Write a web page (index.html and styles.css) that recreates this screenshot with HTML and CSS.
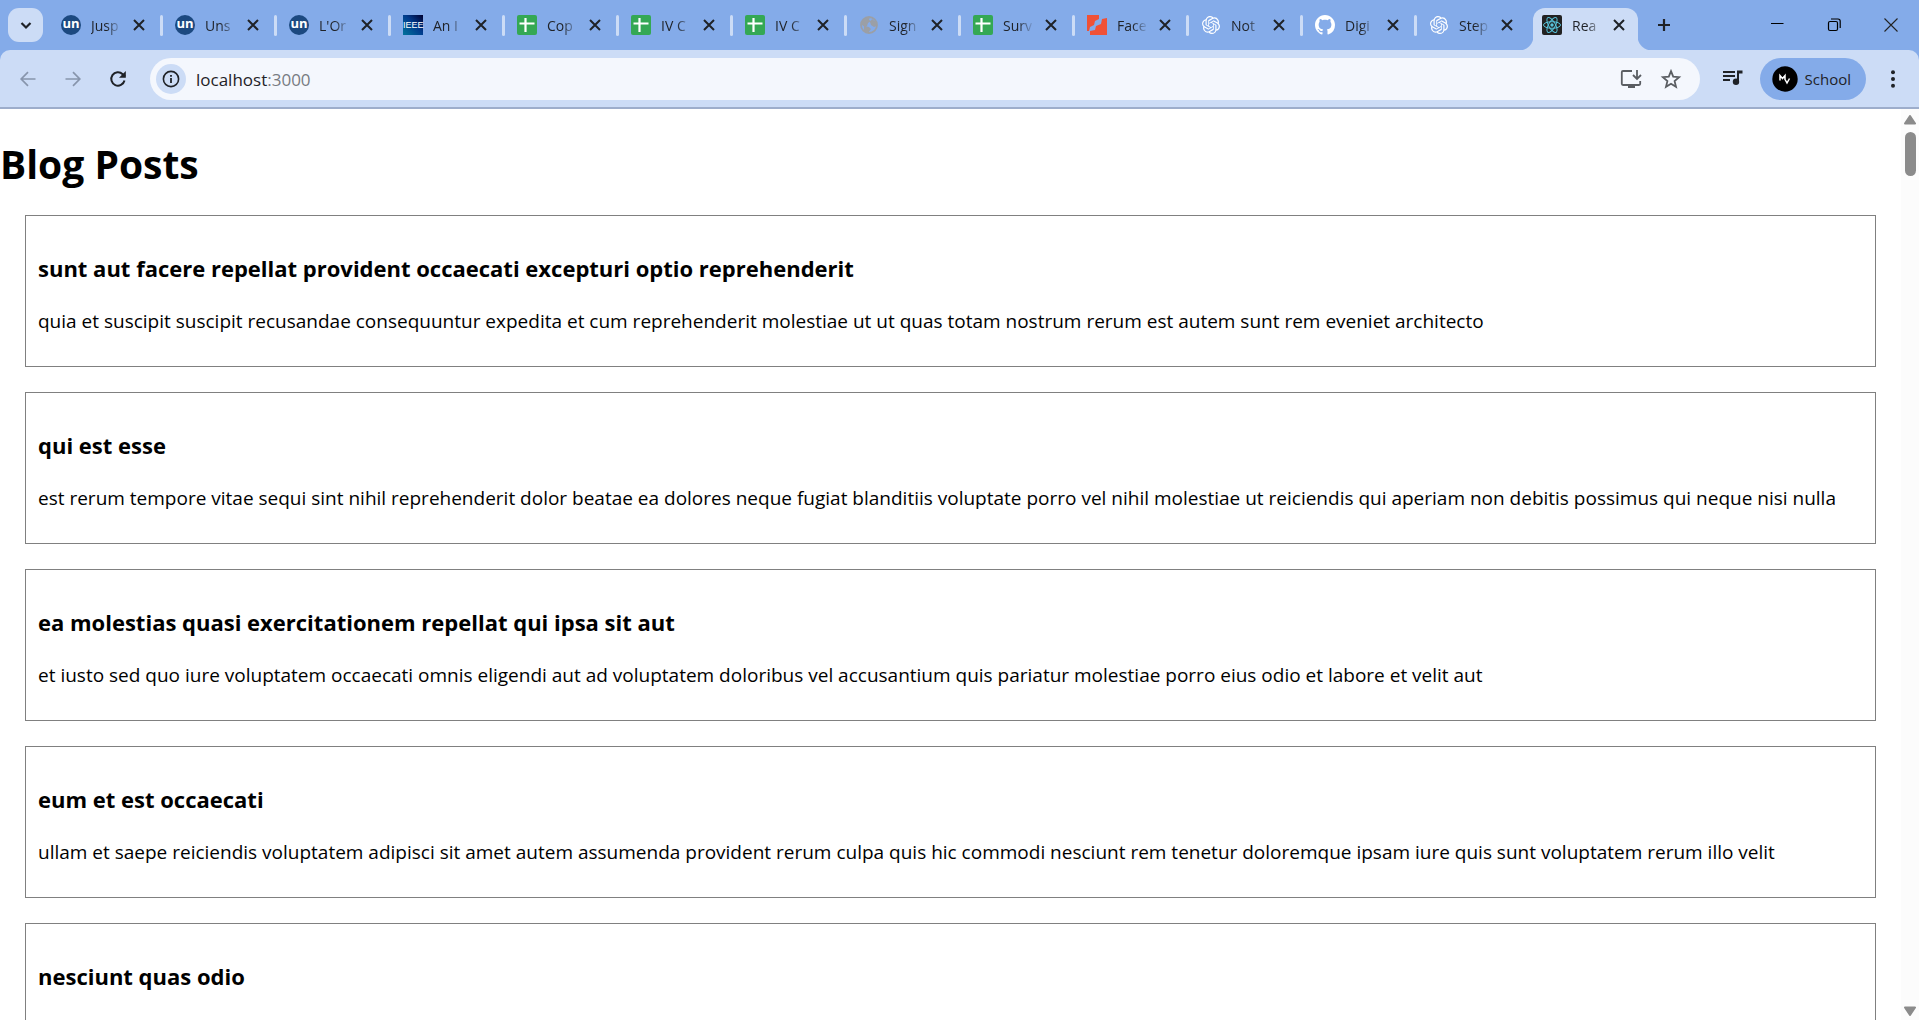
FILE: index.html
```html
<!DOCTYPE html>
<html lang="en">
<head>
<meta charset="utf-8">
<title>React App</title>
<link rel="stylesheet" href="styles.css">
</head>
<body>
<svg class="sprite" aria-hidden="true">
  <symbol id="close" viewBox="0 0 20 20"><path d="M5 5l10 10M15 5L5 15" fill="none" stroke="currentColor" stroke-width="2"/></symbol>
  <symbol id="sheet" viewBox="0 0 20 20"><rect width="20" height="20" rx="2" fill="#34a853"/><path d="M8.500 3v14M2.500 8.500h15" fill="none" stroke="#fff" stroke-width="2.200"/></symbol>
  <symbol id="globe" viewBox="0 0 20 20"><circle cx="10" cy="10" r="8" fill="none" stroke="#9b9fa6" stroke-width="1.800"/><path d="M3 6c2-3 5-4 8-4l-1 3 2 1-3 2-1 3-2 1-3-2zM13 4l4 3 1 4-3 1-3-2-1-3zM5 11l5 1 2 2-3 4-4-2z" fill="#9b9fa6"/></symbol>
  <symbol id="knot" viewBox="0 0 24 24"><path fill="#fff" d="M22.282 9.821a5.985 5.985 0 0 0-.516-4.910 6.046 6.046 0 0 0-6.510-2.900A6.065 6.065 0 0 0 4.981 4.182a5.985 5.985 0 0 0-3.998 2.900 6.046 6.046 0 0 0 .743 7.097 5.980 5.980 0 0 0 .511 4.911 6.051 6.051 0 0 0 6.515 2.900A5.985 5.985 0 0 0 13.260 24a6.056 6.056 0 0 0 5.772-4.206 5.990 5.990 0 0 0 3.998-2.900 6.056 6.056 0 0 0-.748-7.073zM13.260 22.430a4.476 4.476 0 0 1-2.876-1.041l.141-.080 4.779-2.758a.795.795 0 0 0 .392-.681v-6.737l2.020 1.169a.071.071 0 0 1 .038.052v5.583a4.504 4.504 0 0 1-4.494 4.493zM3.600 18.304a4.471 4.471 0 0 1-.535-3.014l.142.085 4.783 2.759a.771.771 0 0 0 .781 0l5.843-3.369v2.332a.080.080 0 0 1-.033.062L9.740 19.950a4.499 4.499 0 0 1-6.140-1.646zM2.340 7.896a4.485 4.485 0 0 1 2.366-1.973V11.600a.766.766 0 0 0 .388.677l5.814 3.354-2.020 1.169a.076.076 0 0 1-.071 0l-4.830-2.787A4.504 4.504 0 0 1 2.340 7.872zm16.597 3.855l-5.833-3.387L15.119 7.200a.076.076 0 0 1 .071 0l4.830 2.791a4.494 4.494 0 0 1-.676 8.105v-5.678a.790.790 0 0 0-.407-.667zm2.010-3.023l-.141-.085-4.774-2.782a.776.776 0 0 0-.785 0L9.409 9.230V6.897a.066.066 0 0 1 .028-.061l4.830-2.787a4.499 4.499 0 0 1 6.680 4.660zM8.307 12.863l-2.020-1.164a.080.080 0 0 1-.038-.057V6.075a4.499 4.499 0 0 1 7.375-3.453l-.142.080L8.704 5.460a.795.795 0 0 0-.393.681zm1.097-2.365l2.602-1.500 2.607 1.500v2.999l-2.597 1.500-2.607-1.500z"/></symbol>
</svg>

<header class="browser">
  <nav class="strip" aria-label="Tabs">
    <button class="search-tabs" aria-label="Search tabs"><svg viewBox="0 0 20 20"><path d="M5.500 8l4.500 4.500L14.500 8" fill="none" stroke="currentColor" stroke-width="2.200"/></svg></button>
    <div class="tabs">
      <div class="tab"><span class="icon un">un</span><span class="title">Jusp</span><button class="x" aria-label="Close"><svg><use href="#close"/></svg></button></div>
      <div class="tab"><span class="icon un">un</span><span class="title">Uns</span><button class="x" aria-label="Close"><svg><use href="#close"/></svg></button></div>
      <div class="tab"><span class="icon un">un</span><span class="title">L'Or</span><button class="x" aria-label="Close"><svg><use href="#close"/></svg></button></div>
      <div class="tab"><span class="icon ieee">IEEE</span><span class="title">An I</span><button class="x" aria-label="Close"><svg><use href="#close"/></svg></button></div>
      <div class="tab"><svg class="icon"><use href="#sheet"/></svg><span class="title">Cop</span><button class="x" aria-label="Close"><svg><use href="#close"/></svg></button></div>
      <div class="tab"><svg class="icon"><use href="#sheet"/></svg><span class="title">IV C</span><button class="x" aria-label="Close"><svg><use href="#close"/></svg></button></div>
      <div class="tab"><svg class="icon"><use href="#sheet"/></svg><span class="title">IV C</span><button class="x" aria-label="Close"><svg><use href="#close"/></svg></button></div>
      <div class="tab"><svg class="icon"><use href="#globe"/></svg><span class="title">Sign</span><button class="x" aria-label="Close"><svg><use href="#close"/></svg></button></div>
      <div class="tab"><svg class="icon"><use href="#sheet"/></svg><span class="title">Surv</span><button class="x" aria-label="Close"><svg><use href="#close"/></svg></button></div>
      <div class="tab"><svg class="icon" viewBox="0 0 20 20"><path d="M0 0h12v4l-4 2-1 4-4 2-1 4H0zM20 3v17H3v-4l5-1 1-4 5-2 1-5z" fill="#f05136"/></svg><span class="title">Face</span><button class="x" aria-label="Close"><svg><use href="#close"/></svg></button></div>
      <div class="tab"><svg class="icon small"><use href="#knot"/></svg><span class="title">Not</span><button class="x" aria-label="Close"><svg><use href="#close"/></svg></button></div>
      <div class="tab"><svg class="icon" viewBox="0 0 16 16"><path fill="#fff" d="M8 0C3.580 0 0 3.580 0 8c0 3.540 2.290 6.530 5.470 7.590.4.070.55-.17.55-.38 0-.19-.01-.82-.01-1.490-2.010.37-2.530-.49-2.690-.94-.09-.23-.48-.94-.82-1.130-.28-.15-.68-.52-.01-.53.63-.01 1.080.58 1.230.82.72 1.210 1.870.87 2.330.66.07-.52.28-.87.51-1.070-1.780-.2-3.640-.89-3.640-3.950 0-.87.31-1.590.82-2.150-.08-.2-.36-1.020.08-2.120 0 0 .67-.21 2.200.82.64-.18 1.320-.27 2-.27s1.360.09 2 .27c1.530-1.040 2.200-.82 2.200-.82.44 1.100.16 1.920.08 2.120.51.56.82 1.270.82 2.150 0 3.070-1.870 3.750-3.650 3.950.29.25.54.73.54 1.480 0 1.070-.01 1.930-.01 2.200 0 .21.15.46.55.38A8.010 8.010 0 0 0 16 8c0-4.420-3.580-8-8-8z"/></svg><span class="title">Digi</span><button class="x" aria-label="Close"><svg><use href="#close"/></svg></button></div>
      <div class="tab"><svg class="icon small"><use href="#knot"/></svg><span class="title">Step</span><button class="x" aria-label="Close"><svg><use href="#close"/></svg></button></div>
      <div class="tab active" aria-current="page"><svg class="icon" viewBox="0 0 20 20"><rect width="20" height="20" rx="2" fill="#222"/><g fill="none" stroke="#58c4dc" stroke-width="1"><ellipse cx="10" cy="10" rx="8.500" ry="3.300"/><ellipse cx="10" cy="10" rx="8.500" ry="3.300" transform="rotate(60 10 10)"/><ellipse cx="10" cy="10" rx="8.500" ry="3.300" transform="rotate(120 10 10)"/></g><circle cx="10" cy="10" r="1.700" fill="#58c4dc"/></svg><span class="title">Rea</span><button class="x" aria-label="Close"><svg><use href="#close"/></svg></button></div>
    </div>
    <button class="new-tab" aria-label="New tab"><svg viewBox="0 0 20 20"><path d="M10 4v12M4 10h12" fill="none" stroke="currentColor" stroke-width="2.200"/></svg></button>
    <div class="window-buttons">
      <button aria-label="Minimize"><svg viewBox="0 0 20 20"><path d="M4 8.500h12.500" stroke="#000"/></svg></button>
      <button aria-label="Restore"><svg viewBox="0 0 20 20"><g fill="none" stroke="#000" stroke-width="1.200"><rect x="4.500" y="6.500" width="9" height="9" rx="1.500"/><path d="M7 4h7q2.200 0 2.200 2.200V13"/></g></svg></button>
      <button aria-label="Close window"><svg viewBox="0 0 20 20"><path d="M3.500 3.500l13 13M16.500 3.500l-13 13" stroke="#222" stroke-width="1.100"/></svg></button>
    </div>
  </nav>
  <div class="toolbar">
    <div class="nav-buttons">
      <button class="dim" aria-label="Back"><svg viewBox="0 0 20 20"><path d="M17.500 10H3.500M10 3.200L3.200 10l6.800 6.800" fill="none" stroke="currentColor" stroke-width="1.700"/></svg></button>
      <button class="dim" aria-label="Forward"><svg viewBox="0 0 20 20"><path d="M2.500 10h14M10 3.200l6.800 6.800-6.800 6.800" fill="none" stroke="currentColor" stroke-width="1.700"/></svg></button>
      <button aria-label="Reload"><svg viewBox="0 0 20 20"><path d="M16.500 11.500A6.700 6.700 0 1 1 14.700 5.200L17 7.500" fill="none" stroke="currentColor" stroke-width="2"/><path d="M17.800 2v6.800H11z" fill="currentColor"/></svg></button>
    </div>
    <div class="omnibox">
      <button class="info" aria-label="Site information"><svg viewBox="0 0 20 20"><circle cx="10" cy="10" r="7.600" fill="none" stroke="currentColor" stroke-width="1.600"/><path d="M10 9v5M10 6v1.800" stroke="currentColor" stroke-width="1.800"/></svg></button>
      <a class="url" href="#posts"><b>localhost</b>:3000</a>
      <button class="tool" aria-label="Install app"><svg viewBox="0 0 22 20"><path d="M12 2H3q-1.200 0-1.200 1.200v11.600Q1.800 16 3 16h16q1.200 0 1.200-1.200V12" fill="none" stroke="currentColor" stroke-width="1.800"/><path d="M8 16.500h7V19H8z" fill="currentColor"/><path d="M17 1v8M13 6l4 4 4-4" fill="none" stroke="currentColor" stroke-width="1.800"/></svg></button>
      <button class="tool" aria-label="Bookmark"><svg viewBox="0 0 22 20"><path d="M11 2.200l2.200 5.500 5.900.5-4.500 3.900 1.400 5.700-5-3.100-5 3.100 1.400-5.700L2.900 8.200l5.900-.5z" fill="none" stroke="currentColor" stroke-width="1.800"/></svg></button>
    </div>
    <button class="media" aria-label="Media"><svg viewBox="0 0 22 20"><path d="M1 3h12M1 7h12M1 11h7" stroke="currentColor" stroke-width="2"/><path d="M15 1.500h5.500V4.500H17V13h-2z" fill="currentColor"/><circle cx="14" cy="12.700" r="3.200" fill="currentColor"/></svg></button>
    <button class="profile"><svg viewBox="0 0 26 26"><circle cx="13" cy="13" r="12.700" fill="#000"/><path d="M8 14.500V9.500l2.500 3 2.500-3v3.500M12.500 12.500l2.500 4.500 2.500-4.500" fill="none" stroke="#fff" stroke-width="1.500"/></svg>School</button>
    <button class="menu" aria-label="Menu"><svg viewBox="0 0 20 20"><g fill="currentColor"><circle cx="10" cy="3.200" r="2"/><circle cx="10" cy="10" r="2"/><circle cx="10" cy="16.800" r="2"/></g></svg></button>
  </div>
</header>

<div class="viewport">
  <main id="posts">
    <h1>Blog Posts</h1>
    <article><h2>sunt aut facere repellat provident occaecati excepturi optio reprehenderit</h2><p>quia et suscipit suscipit recusandae consequuntur expedita et cum reprehenderit molestiae ut ut quas totam nostrum rerum est autem sunt rem eveniet architecto</p></article>
    <article><h2>qui est esse</h2><p>est rerum tempore vitae sequi sint nihil reprehenderit dolor beatae ea dolores neque fugiat blanditiis voluptate porro vel nihil molestiae ut reiciendis qui aperiam non debitis possimus qui neque nisi nulla</p></article>
    <article><h2>ea molestias quasi exercitationem repellat qui ipsa sit aut</h2><p>et iusto sed quo iure voluptatem occaecati omnis eligendi aut ad voluptatem doloribus vel accusantium quis pariatur molestiae porro eius odio et labore et velit aut</p></article>
    <article><h2>eum et est occaecati</h2><p>ullam et saepe reiciendis voluptatem adipisci sit amet autem assumenda provident rerum culpa quis hic commodi nesciunt rem tenetur doloremque ipsam iure quis sunt voluptatem rerum illo velit</p></article>
    <article><h2>nesciunt quas odio</h2></article>
  </main>
  <div class="scrollbar" aria-hidden="true">
    <svg viewBox="0 0 14 10"><path d="M7 1l5 7.500H2z" fill="#8b8b8b" stroke="#8b8b8b" stroke-width="2" stroke-linejoin="round"/></svg>
    <div class="thumb"></div>
    <svg viewBox="0 0 14 10"><path d="M7 9l5-7.500H2z" fill="#8b8b8b" stroke="#8b8b8b" stroke-width="2" stroke-linejoin="round"/></svg>
  </div>
</div>
</body>
</html>
```
FILE: styles.css
```css
* { box-sizing: border-box; }
body {
  margin: 0;
  height: 100vh;
  display: flex;
  flex-direction: column;
  overflow: hidden;
  background: #fff;
  color: #000;
  font-family: "Open Sans", "Noto Sans", sans-serif;
}
.sprite { display: none; }
button {
  display: flex;
  align-items: center;
  justify-content: center;
  flex: none;
  margin: 0;
  padding: 0;
  border: 0;
  background: none;
  color: #1f2227;
  font: inherit;
}
button svg { width: 20px; height: 20px; }

/* Tab strip */
.browser { flex: none; background: #84abe9; color: #1f2227; }
.strip { display: flex; align-items: center; height: 50px; padding-left: 8px; }
.search-tabs { width: 35px; height: 34px; border-radius: 11px; background: #ccdcf6; }
.tabs { display: flex; flex: 0 1 1596px; min-width: 0; align-self: stretch; margin-left: 7px; }
.tab {
  position: relative;
  display: flex;
  flex: 1 1 0;
  min-width: 0;
  align-items: center;
  padding-left: 11px;
  font-size: 14px;
}
.tab:not(.active)::after {
  content: "";
  flex: none;
  width: 3px;
  height: 21px;
  margin: 0 1px 0 11px;
  border-radius: 2px;
  background: #ccdcf6;
}
.tab:nth-last-child(2)::after { visibility: hidden; }
.icon { flex: none; width: 20px; height: 20px; }
.icon.small { padding: 1px; }
.un {
  border-radius: 50%;
  background: #1c4980;
  color: #fff;
  font-size: 13px;
  font-weight: 700;
  line-height: 17px;
  text-align: center;
}
.ieee {
  background: linear-gradient(45deg, #00739c, #003a8c 55%, #000030);
  color: #fff;
  font: 9px/20px "Liberation Sans", sans-serif;
  text-align: center;
}
.title {
  flex: 1;
  min-width: 0;
  margin: 0 7px 0 10px;
  overflow: hidden;
  white-space: nowrap;
  -webkit-mask-image: linear-gradient(to right, #000 50%, transparent);
  mask-image: linear-gradient(to right, #000 50%, transparent);
}
.x { width: 20px; height: 20px; }
.active {
  flex: 0 0 105px;
  align-self: flex-end;
  height: 42px;
  margin: 0 8px 0 1px;
  padding: 0 9px 8px;
  border-radius: 12px 12px 0 0;
  background: #ccdcf6;
}
.active::before,
.active::after {
  content: "";
  position: absolute;
  bottom: 0;
  width: 14px;
  height: 14px;
}
.active::before { right: 100%; background: radial-gradient(circle at 0 0, #84abe9 14px, #ccdcf6 15px); }
.active::after { left: 100%; background: radial-gradient(circle at 100% 0, #84abe9 14px, #ccdcf6 15px); }
.new-tab { margin-left: 8px; width: 20px; height: 20px; }
.window-buttons { display: flex; gap: 37px; margin-left: auto; padding-right: 18px; }

/* Toolbar */
.toolbar {
  display: flex;
  align-items: center;
  height: 59px;
  padding: 1px 16px 0 18px;
  border-bottom: 2px solid #9dadcb;
  border-radius: 10px 10px 0 0;
  background: #ccdcf6;
}
.nav-buttons { display: flex; gap: 25px; margin-right: 22px; }
.dim { color: #8795ac; }
.omnibox {
  display: flex;
  flex: 1;
  align-items: center;
  height: 42px;
  padding: 0 18px 0 6px;
  border-radius: 21px;
  background: #f4f7fd;
}
.info { width: 30px; height: 30px; border-radius: 50%; background: #ccdcf6; }
.url { flex: 1; margin-left: 10px; color: #777b82; font-size: 17px; text-decoration: none; }
.url b { color: #1f2227; font-weight: 400; }
.tool { margin-left: 18px; color: #5a5d62; }
.tool svg, .media svg { width: 22px; }
.media { margin-left: 22px; }
.profile {
  gap: 7px;
  height: 42px;
  margin-left: 16px;
  padding: 0 15px 0 12px;
  border-radius: 21px;
  background: #84abe9;
  font-size: 15px;
}
.profile svg { width: 26px; height: 26px; }
.menu { margin-left: 17px; }

/* Page */
.viewport { display: flex; flex: 1; min-height: 0; }
main { flex: 1; min-width: 0; overflow: hidden; }
h1 { margin: 28px 0 24px; font-size: 39px; line-height: 54px; }
article {
  height: 152px;
  margin: 0 25px 25px;
  padding: 37px 12px;
  border: 1px solid #808080;
}
h2 { margin: 0 0 25px; font-size: 22px; line-height: 30px; }
p { margin: 0; font-size: 19px; line-height: 26px; white-space: nowrap; }
.scrollbar {
  display: flex;
  flex: none;
  flex-direction: column;
  align-items: center;
  width: 18px;
  padding: 6px 0 4px;
  background: #fcfcfc;
}
.scrollbar svg { width: 14px; height: 10px; }
.thumb { width: 11px; height: 44px; margin: 7px 0 auto; border-radius: 6px; background: #8b8b8b; }
```
